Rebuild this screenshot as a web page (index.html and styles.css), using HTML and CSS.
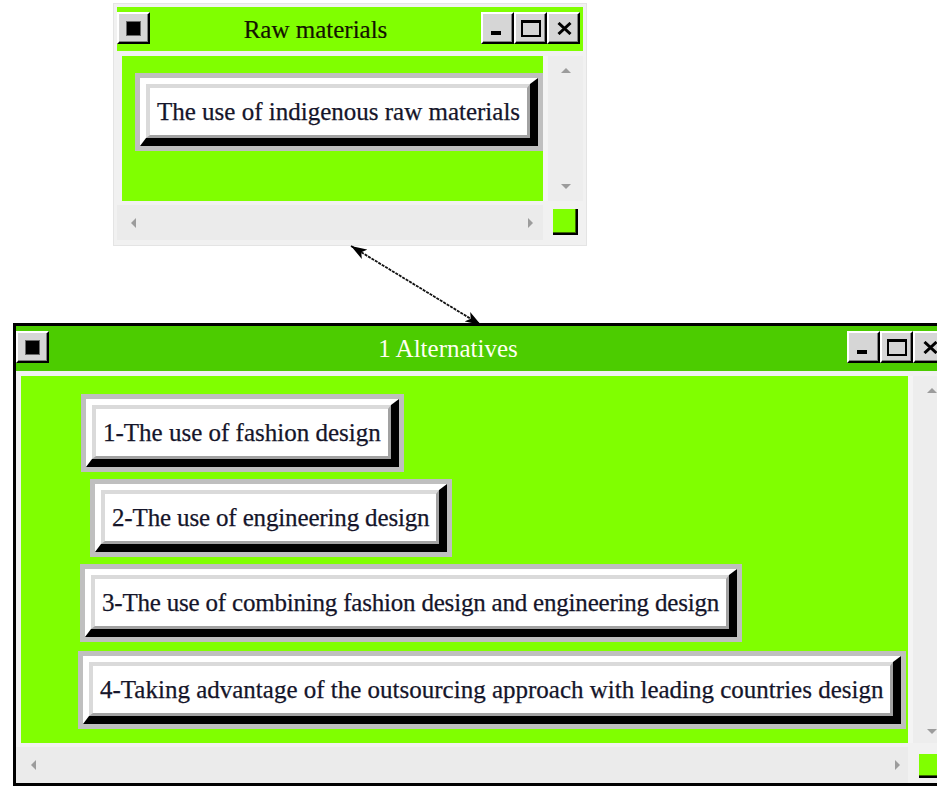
FILE: index.html
```html
<!DOCTYPE html>
<html lang="en">
<head>
<meta charset="utf-8">
<title>Raw materials / Alternatives</title>
<link rel="stylesheet" href="styles.css">
</head>
<body>
<div class="desk">

  <section class="win win-raw">
    <header class="titlebar">
      <span class="btn btn-sys"><span class="sys-mark"></span></span>
      <h2 class="title">Raw materials</h2>
      <span class="btn btn-min"><span class="min-mark"></span></span>
      <span class="btn btn-max"><span class="max-mark"></span></span>
      <span class="btn btn-close">
        <svg class="close-mark" width="15" height="13" viewBox="0 0 15 13"><path d="M1.5 1 L13.5 12 M13.5 1 L1.5 12" stroke="#000" stroke-width="3" fill="none"/></svg>
      </span>
    </header>
    <div class="body">
      <div class="row">
        <div class="canvas canvas-raw">
          <div class="node node-raw"><span class="face"><span class="label">The use of indigenous raw materials</span></span></div>
        </div>
        <div class="vscroll"><span class="arr arr-up"></span><span class="arr arr-down"></span></div>
      </div>
      <div class="hrow">
        <div class="hscroll"><span class="arr arr-left"></span><span class="arr arr-right"></span></div>
        <div class="corner"><span class="grip"></span></div>
      </div>
    </div>
  </section>

  <section class="win win-alt">
    <header class="titlebar">
      <span class="btn btn-sys"><span class="sys-mark"></span></span>
      <h2 class="title">1 Alternatives</h2>
      <span class="btn btn-min"><span class="min-mark"></span></span>
      <span class="btn btn-max"><span class="max-mark"></span></span>
      <span class="btn btn-close">
        <svg class="close-mark" width="15" height="13" viewBox="0 0 15 13"><path d="M1.5 1 L13.5 12 M13.5 1 L1.5 12" stroke="#000" stroke-width="3" fill="none"/></svg>
      </span>
    </header>
    <div class="body">
      <div class="row">
        <div class="canvas canvas-alt">
          <div class="node node-1"><span class="face"><span class="label">1-The use of fashion design</span></span></div>
          <div class="node node-2"><span class="face"><span class="label">2-The use of engineering design</span></span></div>
          <div class="node node-3"><span class="face"><span class="label">3-The use of combining fashion design and engineering design</span></span></div>
          <div class="node node-4"><span class="face"><span class="label">4-Taking advantage of the outsourcing approach with leading countries design</span></span></div>
        </div>
        <div class="vscroll"><span class="arr arr-up"></span><span class="arr arr-down"></span></div>
      </div>
      <div class="hrow">
        <div class="hscroll"><span class="arr arr-left"></span><span class="arr arr-right"></span></div>
        <div class="corner"><span class="grip"></span></div>
      </div>
    </div>
  </section>

  <!-- two-way link between the windows -->
  <svg class="link" width="937" height="786" viewBox="0 0 937 786">
    <defs>
      <marker id="head" viewBox="0 0 16 11" refX="16" refY="5.5" markerWidth="16" markerHeight="11" markerUnits="userSpaceOnUse" orient="auto-start-reverse">
        <path d="M0 0 L16 5.5 L0 11 L4 5.5 Z" fill="#000"/>
      </marker>
    </defs>
    <line x1="351" y1="246" x2="481" y2="325" stroke="#111" stroke-width="1.8" stroke-dasharray="3 1" marker-start="url(#head)" marker-end="url(#head)"/>
  </svg>

</div>
</body>
</html>
```
FILE: styles.css
```css
* { box-sizing: border-box; }

html, body { margin: 0; padding: 0; }

body {
  background: #fff;
  font-family: "Liberation Serif", "Times New Roman", Times, serif;
}

.desk {
  position: relative;
  width: 937px;
  height: 786px;
  overflow: hidden;
}

/* ---------- windows ---------- */
.win {
  position: absolute;
  display: flex;
  flex-direction: column;
  background: #f1f1f1;
}

.win-raw {
  left: 114px;
  top: 4px;
  width: 472px;
  height: 241px;
  border: 3px solid #f1f1f1;
  box-shadow: 0 0 0 1px #e4e4e4;
}

.win-alt {
  left: 13px;
  top: 323px;
  width: 940px;
  height: 463px;
  border: 3px solid #000;
}

/* ---------- title bar ---------- */
.titlebar {
  flex: none;
  display: flex;
  align-items: flex-start;
  height: 44px;
  padding: 5px 3px 0 0;
  background: #80ff00;
}

.win-alt .titlebar {
  height: 45px;
  padding-right: 4px;
  background: #4ccc00;
}

.title {
  flex: 1;
  margin: 0;
  font-family: "Liberation Serif", "Times New Roman", Times, serif;
  font-size: 25px;
  font-weight: normal;
  line-height: 35px;
  text-align: center;
  white-space: nowrap;
  color: #141400;
  -webkit-text-stroke: 0.2px #141400;
}

.win-alt .title {
  color: #fffff2;
  -webkit-text-stroke: 0;
}

.btn {
  flex: none;
  display: flex;
  align-items: center;
  justify-content: center;
  width: 33px;
  height: 32px;
  background: #d6d6d6;
  border: 2px solid;
  border-color: #fff #000 #000 #fff;
  box-shadow: inset -1px -1px 0 #808080;
}

.sys-mark {
  width: 13px;
  height: 13px;
  background: #000;
  box-shadow: 0 0 0 1px #6a6a6a;
}

.btn-min {
  align-items: flex-end;
  padding: 0 3px 7px 0;
}

.min-mark {
  width: 10px;
  height: 4px;
  background: #000;
}

.max-mark {
  width: 20px;
  height: 17px;
  border: 2px solid #000;
  border-top-width: 3px;
}

.btn-close { padding-left: 2px; }

.close-mark { display: block; }

/* ---------- client area ---------- */
.body {
  flex: 1;
  display: flex;
  flex-direction: column;
  padding-top: 5px;
}

.row {
  flex: none;
  display: flex;
  padding-left: 5px;
}

.win-raw .row { height: 145px; }
.win-alt .row { height: 367px; }

.canvas {
  flex: 1;
  display: flex;
  flex-direction: column;
  align-items: flex-start;
  overflow: hidden;
  background: #80ff00;
}

.canvas-raw { padding: 17px 0 0 13px; }
.canvas-alt { padding-top: 18px; }

/* ---------- diagram nodes ---------- */
.node {
  flex: none;
  border: 5px solid #bfbfbf;
  background: #bfbfbf;
}

.face {
  display: block;
  border-style: solid;
  border-width: 6px 8px 8px 6px;
  border-color: #fff #000 #000 #fff;
}

.label {
  display: block;
  padding: 0 7px 0 7px;
  border-style: solid;
  border-width: 4px 3px 3px 4px;
  border-color: #dadada #a2a2a2 #a2a2a2 #dadada;
  background: #fff;
  font-size: 25px;
  line-height: 47px;
  white-space: nowrap;
  color: #15152a;
  -webkit-text-stroke: 0.25px #15152a;
}

.node-1 { margin-left: 60px; }
.node-2 { margin: 7px 0 0 69px; }
.node-3 { margin: 7px 0 0 59px; }
.node-4 { margin: 9px 0 0 57px; }

.node-2 .label { letter-spacing: -0.15px; }
.node-3 .label { letter-spacing: -0.2px; }

/* ---------- scroll bars ---------- */
.vscroll {
  flex: none;
  display: flex;
  flex-direction: column;
  justify-content: space-between;
  align-items: flex-start;
  width: 40px;
  padding: 12px 0 12px 13px;
  background: #ededed;
  border-left: 5px solid #f4f4f4;
}

.win-alt .vscroll {
  width: 42px;
  padding: 12px 0 9px 14px;
}

.hrow {
  flex: 1;
  display: flex;
  padding-top: 4px;
}

.hscroll {
  flex: 1;
  display: flex;
  align-items: center;
  justify-content: space-between;
  height: 35px;
  padding: 0 10px 0 14px;
  background: #ebebeb;
}

.win-alt .hscroll {
  height: 36px;
  padding: 0 8px 0 15px;
}

.corner {
  flex: none;
  width: 40px;
  padding: 4px 0 0 10px;
}

.win-alt .corner {
  width: 42px;
  padding: 7px 0 0 11px;
}

.grip {
  display: block;
  width: 25px;
  height: 26px;
  background: #80ff00;
  border-right: 2px solid #000;
  border-bottom: 2px solid #000;
  box-shadow: inset -1px -1px 0 #3c6a00;
}

.win-alt .grip { height: 24px; }

.arr {
  display: block;
  width: 0;
  height: 0;
  border: 5px solid transparent;
}

.arr-up { border-top-width: 0; border-bottom-color: #9c9c9c; }
.arr-down { border-bottom-width: 0; border-top-color: #9c9c9c; }
.arr-left { border-left-width: 0; border-right-color: #9c9c9c; }
.arr-right { border-right-width: 0; border-left-color: #9c9c9c; }

/* ---------- connector ---------- */
.link {
  position: absolute;
  left: 0;
  top: 0;
  pointer-events: none;
}
```
